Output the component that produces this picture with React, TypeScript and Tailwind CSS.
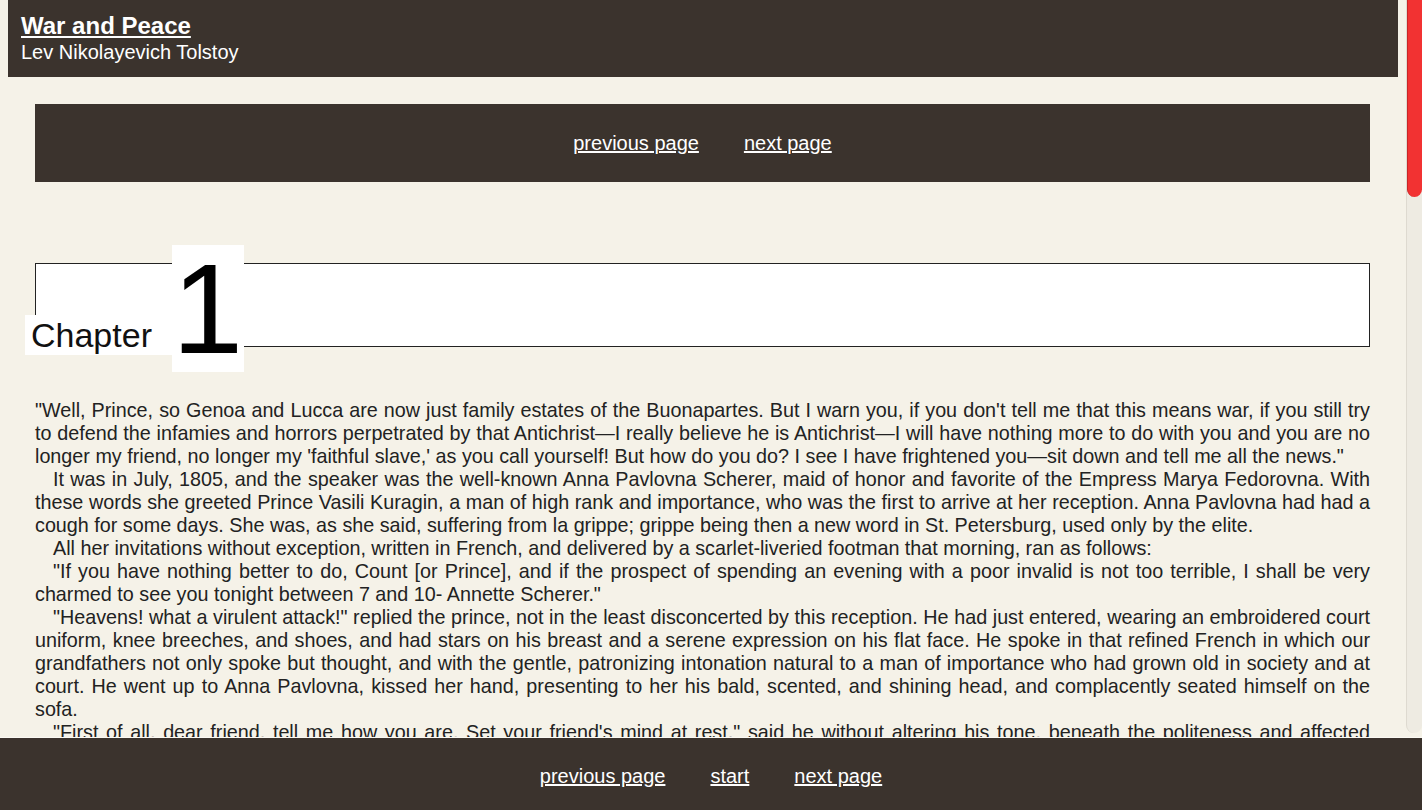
import React from "react";

const paragraphs = [
  `"Well, Prince, so Genoa and Lucca are now just family estates of the Buonapartes. But I warn you, if you don't tell me that this means war, if you still try to defend the infamies and horrors perpetrated by that Antichrist—I really believe he is Antichrist—I will have nothing more to do with you and you are no longer my friend, no longer my 'faithful slave,' as you call yourself! But how do you do? I see I have frightened you—sit down and tell me all the news."`,
  `It was in July, 1805, and the speaker was the well-known Anna Pavlovna Scherer, maid of honor and favorite of the Empress Marya Fedorovna. With these words she greeted Prince Vasili Kuragin, a man of high rank and importance, who was the first to arrive at her reception. Anna Pavlovna had had a cough for some days. She was, as she said, suffering from la grippe; grippe being then a new word in St. Petersburg, used only by the elite.`,
  `All her invitations without exception, written in French, and delivered by a scarlet-liveried footman that morning, ran as follows:`,
  `"If you have nothing better to do, Count [or Prince], and if the prospect of spending an evening with a poor invalid is not too terrible, I shall be very charmed to see you tonight between 7 and 10- Annette Scherer."`,
  `"Heavens! what a virulent attack!" replied the prince, not in the least disconcerted by this reception. He had just entered, wearing an embroidered court uniform, knee breeches, and shoes, and had stars on his breast and a serene expression on his flat face. He spoke in that refined French in which our grandfathers not only spoke but thought, and with the gentle, patronizing intonation natural to a man of importance who had grown old in society and at court. He went up to Anna Pavlovna, kissed her hand, presenting to her his bald, scented, and shining head, and complacently seated himself on the sofa.`,
  `"First of all, dear friend, tell me how you are. Set your friend's mind at rest," said he without altering his tone, beneath the politeness and affected sympathy of which indifference and even irony could be discerned.`,
  `"Can one be well while suffering morally? Can one be calm in times like these if one has any feeling?" said Anna Pavlovna. "You are staying the whole evening, I hope?"`,
  `"And the fete at the English ambassador's? Today is Wednesday. I must put in an appearance there," said the prince. "My daughter is coming for me to take me there."`,
  `"I thought today's fete had been canceled. I confess all these festivities and fireworks are becoming wearisome."`,
  `"If they had known that you wished it, the entertainment would have been put off," said the prince, who, like a wound-up clock, by force of habit said things he did not even wish to be believed.`,
  `"Don't tease! Well, and what has been decided about Novosiltsev's dispatch? You know everything."`,
  `"What can one say about it?" replied the prince in a cold, listless tone. "What has been decided? They have decided that Buonaparte has burnt his boats, and I believe that we are ready to burn ours."`,
  `Prince Vasili always spoke languidly, like an actor repeating a stale part. Anna Pavlovna Scherer on the contrary, despite her forty years, overflowed with animation and impulsiveness. To be an enthusiast had become her social vocation and, sometimes even when she did not feel like it, she became enthusiastic in order not to disappoint the expectations of those who knew her. The subdued smile which, though it did not suit her faded features, always played round her lips expressed, as in a spoiled child, a continual consciousness of her charming defect, which she neither wished, nor could, nor considered it necessary, to correct.`,
  `In the midst of a conversation on political matters Anna Pavlovna burst out:`,
  `"Oh, don't speak to me of Austria. Perhaps I don't understand things, but Austria never has wished, and does not wish, for war. She is betraying us! Russia alone must save Europe. Our gracious sovereign recognizes his high vocation and will be true to it. That is the one thing I have faith in! Our good and wonderful sovereign has to perform the noblest role on earth, and he is so virtuous and noble that God will not forsake him. He will fulfill his vocation and crush the hydra of revolution, which has become more terrible than ever in the person of this murderer and villain! We alone must avenge the blood of the just one.... Whom, I ask you, can we rely on?... England with her commercial spirit will not and cannot understand the Emperor Alexander's loftiness of soul. She has refused to evacuate Malta. She wanted to find, and still seeks, some secret motive in our actions. What answer did Novosiltsev get? None. The English have not understood and cannot understand the self-abnegation of our Emperor who wants nothing for himself, but only desires the good of mankind. And what have they promised? Nothing! And what little they have promised they will not perform! Prussia has always declared that Buonaparte is invincible, and that all Europe is powerless before him.... And I don't believe a word that Hardenburg says, or Haugwitz either. This famous Prussian neutrality is just a trap. I have faith only in God and the lofty destiny of our adored monarch. He will save Europe!"`,
  `She suddenly paused, smiling at her own impetuosity.`,
  `"I think," said the prince with a smile, "that if you had been sent instead of our dear Wintzingerode you would have captured the King of Prussia's consent by assault. You are so eloquent. Will you give me a cup of tea?"`,
  `"In a moment. A propos," she added, becoming calm again, "I am expecting two very interesting men tonight, le Vicomte de Mortemart, who is connected with the Montmorencys through the Rohans, one of the best French families. He is one of the genuine emigres, the good ones. And also the Abbe Morio. Do you know that profound thinker? He has been received by the Emperor. Had you heard?"`,
  `"I shall be delighted to meet them," said the prince. "But tell me," he added with studied carelessness as if it had only just occurred to him, though the question he was about to ask was the chief motive of his visit, "is it true that the Dowager Empress wants Baron Funke to be appointed first secretary at Vienna? The baron by all accounts is a poor creature."`,
  `Prince Vasili wished to obtain this post for his son, but others were trying through the Dowager Empress Marya Fedorovna to secure it for the baron.`,
  `Anna Pavlovna almost closed her eyes to indicate that neither she nor anyone else had a right to criticize what the Empress desired or was pleased with.`,
  `"Baron Funke has been recommended to the Dowager Empress by her sister," was all she said, in a dry and mournful tone.`,
  `As she named the Empress, Anna Pavlovna's face suddenly assumed an expression of profound and sincere devotion and respect mingled with sadness, and this occurred every time she mentioned her illustrious patroness. She added that Her Majesty had deigned to show Baron Funke beaucoup d'estime, and again her face clouded over with sadness.`,
  `The prince was silent and looked indifferent. But, with the womanly and courtierlike quickness and tact habitual to her, Anna Pavlovna wished both to rebuke him (for daring to speak as he had done of a man recommended to the Empress) and at the same time to console him, so she said:`,
  `"Now about your family. Do you know that since your daughter came out everyone has been enraptured by her? They say she is amazingly beautiful."`,
  `The prince bowed to signify his respect and gratitude.`,
  `"I often think," she continued after a short pause, drawing nearer to the prince and smiling amiably at him as if to show that political and social topics were ended and the time had come for intimate conversation—"I often think how unfairly sometimes the joys of life are distributed. Why has fate given you two such splendid children? I don't speak of Anatole, your youngest. I don't like him," she added in a tone admitting of no rejoinder and raising her eyebrows. "Two such charming children. And really you appreciate them less than anyone, and so you don't deserve to have them."`,
  `And she smiled her ecstatic smile.`,
  `"I can't help it," said the prince. "Lavater would have said I lack the bump of paternity."`,
  `"Don't joke; I mean to have a serious talk with you. Do you know I am dissatisfied with your younger son? Between ourselves" (and her face assumed its melancholy expression), "he was mentioned at Her Majesty's and you were pitied...."`,
  `The prince answered nothing, but she looked at him significantly, awaiting a reply. He frowned.`,
  `"What would you have me do?" he said at last. "You know I did all a father could for their education, and they have both turned out fools. Hippolyte is at least a quiet fool, but Anatole is an active one. That is the only difference between them." He said this smiling in a way more natural and animated than usual, so that the wrinkles round his mouth very clearly revealed something unexpectedly coarse and unpleasant.`,
  `"And why are children born to such men as you? If you were not a father there would be nothing I could reproach you with," said Anna Pavlovna, looking up pensively.`,
  `"I am your faithful slave and to you alone I can confess that my children are the bane of my life. It is the cross I have to bear. That is how I explain it to myself. It can't be helped!"`,
  `He said no more, but expressed his resignation to cruel fate by a gesture. Anna Pavlovna meditated.`,
  `"Have you never thought of marrying your prodigal son Anatole?" she asked. "They say old maids have a mania for matchmaking, and though I don't feel that weakness in myself as yet, I know a little person who is very unhappy with her father. She is a relation of yours, Princess Mary Bolkonskaya."`,
  `Prince Vasili did not reply, though, with the quickness of memory and perception befitting a man of the world, he indicated by a movement of the head that he was considering this information.`,
  `"Do you know," he said at last, evidently unable to check the sad current of his thoughts, "that Anatole is costing me forty thousand rubles a year? And," he went on after a pause, "what will it be in five years, if he goes on like this?" Presently he added: "That's what we fathers have to put up with.... Is this princess of yours rich?"`,
  `"Her father is very rich and stingy. He lives in the country. He is the well-known Prince Bolkonski who had to retire from the army under the late Emperor, and was nicknamed 'the King of Prussia.' He is very clever but eccentric, and a bore. The poor girl is very unhappy. She has a brother; I think you know him, he married Lise Meinen lately. He is an aide-de-camp of Kutuzov's and will be here tonight."`,
  `"Listen, dear Annette," said the prince, suddenly taking Anna Pavlovna's hand and for some reason drawing it downwards. "Arrange that affair for me and I shall always be your most devoted slave-slafe with an f, as a village elder of mine writes in his reports. She is rich and of good family and that's all I want."`,
  `And with the familiarity and easy grace peculiar to him, he raised the maid of honor's hand to his lips, kissed it, and swung it to and fro as he lay back in his armchair, looking in another direction.`,
  `"Attendez," said Anna Pavlovna, reflecting, "I'll speak to Lise, young Bolkonski's wife, this very evening, and perhaps the thing can be arranged. It shall be on your family's behalf that I'll start my apprenticeship as old maid."`,
];

function PageLinks({ withStart = false }: { withStart?: boolean }) {
  return (
    <div className="flex justify-center gap-[45px] text-[20px] leading-[23px] text-white">
      <a href="#" className="underline">
        previous page
      </a>
      {withStart && (
        <a href="#" className="underline">
          start
        </a>
      )}
      <a href="#" className="underline">
        next page
      </a>
    </div>
  );
}

// the browser hides native scrollbars, so the page draws its own
function Scrollbar() {
  return (
    <div className="w-[16px] shrink-0 pb-[4px]">
      <div className="h-full rounded-b-[8px] border-l border-[#dedad0] bg-[#eeebe2]">
        <div className="h-[197px] rounded-b-[8px] border-l border-[#c92626] bg-[#f23232]" />
      </div>
    </div>
  );
}

export default function App() {
  return (
    <div className="flex h-screen flex-col bg-[#f5f2e8] font-['Liberation_Sans',Arial,sans-serif]">
      <div className="flex min-h-0 flex-1">
        <main className="min-w-0 flex-1 overflow-y-auto">
          <div className="px-2">
            <header className="h-[77px] bg-[#3b332d] pl-[13px] pt-[11px] text-white">
              <h1 className="text-[24px] leading-[29px] font-bold">
                <a href="#" className="underline">
                  War and Peace
                </a>
              </h1>
              <p className="text-[20px] leading-[24px]">Lev Nikolayevich Tolstoy</p>
            </header>
          </div>

          <div className="ml-[35px] mr-[36px] pb-[60px]">
            <nav className="mt-[27px] flex h-[78px] items-center justify-center bg-[#3b332d]">
              <PageLinks />
            </nav>

            <div className="mt-[81px] h-[84px] border border-[#222] bg-white">
              <div className="-mt-[19px] -ml-[11px] flex items-start">
                <span className="mt-[70px] h-[40px] w-[147px] bg-white pl-[6px] text-[34px] leading-[40px] text-[#111]">
                  Chapter
                </span>
                <span className="h-[127px] w-[72px] bg-white text-[128px] leading-[127px] text-black">
                  1
                </span>
              </div>
            </div>

            <div className="mt-[52px] text-justify text-[19.75px] leading-[23px] text-[#222]">
              {paragraphs.map((p, i) => (
                <p key={i} className={i === 0 ? "" : "indent-[18px]"}>
                  {p}
                </p>
              ))}
            </div>

            <nav className="mt-[40px] flex h-[78px] items-center justify-center bg-[#3b332d]">
              <PageLinks />
            </nav>
          </div>
        </main>
        <Scrollbar />
      </div>

      <footer className="h-[73px] shrink-0 border-t border-[#fbf9f3] bg-[#3b332d] pt-[27px]">
        <PageLinks withStart />
      </footer>
    </div>
  );
}
